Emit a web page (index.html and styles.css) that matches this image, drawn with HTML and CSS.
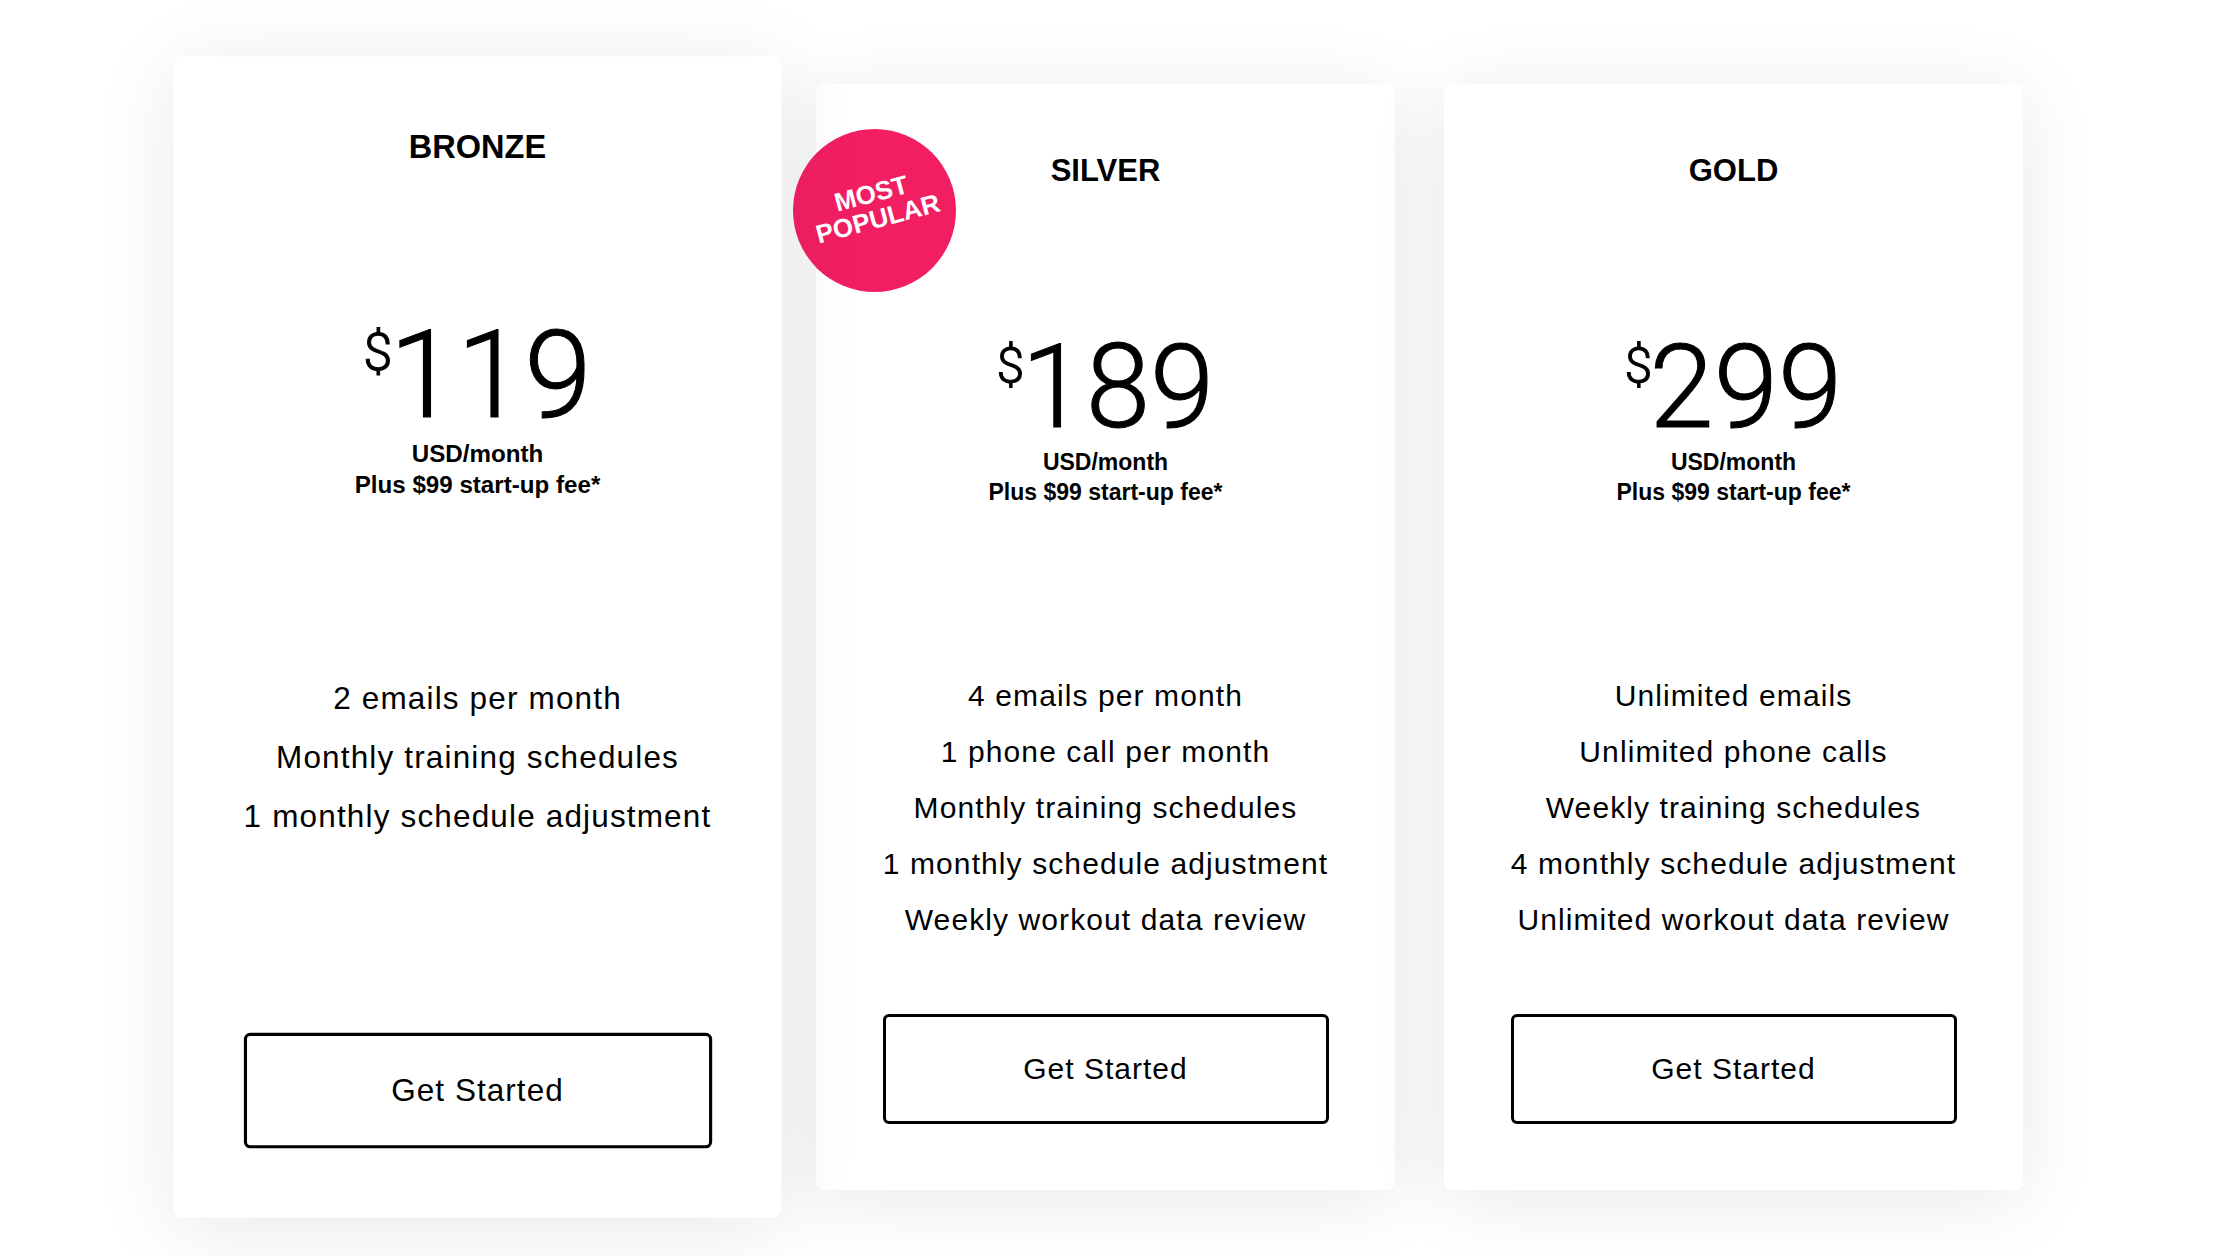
FILE: index.html
```html
<!DOCTYPE html>
<html lang="en">
<head>
<meta charset="utf-8">
<title>Pricing</title>
<link rel="stylesheet" href="styles.css">
</head>
<body>
<main class="pricing">
  <section class="plan plan--raised">
    <h2 class="plan__name">BRONZE</h2>
    <div class="plan__price"><span class="plan__currency">$</span><span class="plan__amount">119</span></div>
    <p class="plan__terms">USD/month<br>Plus $99 start-up fee*</p>
    <ul class="plan__features">
      <li>2 emails per month</li>
      <li>Monthly training schedules</li>
      <li>1 monthly schedule adjustment</li>
    </ul>
    <a class="plan__cta" href="#">Get Started</a>
  </section>
  <section class="plan">
    <div class="badge"><span class="badge__text">MOST<br>POPULAR</span></div>
    <h2 class="plan__name">SILVER</h2>
    <div class="plan__price"><span class="plan__currency">$</span><span class="plan__amount">189</span></div>
    <p class="plan__terms">USD/month<br>Plus $99 start-up fee*</p>
    <ul class="plan__features">
      <li>4 emails per month</li>
      <li>1 phone call per month</li>
      <li>Monthly training schedules</li>
      <li>1 monthly schedule adjustment</li>
      <li>Weekly workout data review</li>
    </ul>
    <a class="plan__cta" href="#">Get Started</a>
  </section>
  <section class="plan">
    <h2 class="plan__name">GOLD</h2>
    <div class="plan__price"><span class="plan__currency">$</span><span class="plan__amount">299</span></div>
    <p class="plan__terms">USD/month<br>Plus $99 start-up fee*</p>
    <ul class="plan__features">
      <li>Unlimited emails</li>
      <li>Unlimited phone calls</li>
      <li>Weekly training schedules</li>
      <li>4 monthly schedule adjustment</li>
      <li>Unlimited workout data review</li>
    </ul>
    <a class="plan__cta" href="#">Get Started</a>
  </section>
</main>
</body>
</html>
```

FILE: styles.css
```css
html, body {
  margin: 0;
  padding: 0;
  background: #fff;
}

body {
  font-family: "Liberation Sans", Arial, Helvetica, sans-serif;
  color: #000;
}

.pricing {
  display: flex;
  align-items: flex-start;
  gap: 49px;
  box-sizing: border-box;
  height: 1256px;
  padding: 84px 0 0 188px;
  overflow: hidden;
}

.plan {
  position: relative;
  flex: 0 0 579px;
  height: 1106px;
  box-sizing: border-box;
  padding: 67px 0 66px;
  display: flex;
  flex-direction: column;
  align-items: center;
  background: #fff;
  border-radius: 8px;
  box-shadow: 0 10px 80px rgba(0, 0, 0, 0.09);
}

.plan--raised {
  transform: scale(1.05);
  z-index: 2;
}

.plan__name {
  margin: 0;
  font-size: 31px;
  line-height: 40px;
  font-weight: 700;
}

.plan__price {
  margin-top: 148px;
  display: flex;
  align-items: flex-start;
  justify-content: center;
  font-family: Roboto, "Liberation Sans", sans-serif;
  font-weight: 300;
  -webkit-text-stroke: 1px #000;
}

.plan__currency {
  font-size: 50px;
  line-height: 50px;
  margin-top: 2px;
  margin-right: -3px;
}

.plan__amount {
  font-size: 116px;
  line-height: 96px;
  letter-spacing: 0;
}

.plan__terms {
  margin: 12px 0 0;
  font-size: 23px;
  line-height: 30px;
  font-weight: 700;
  text-align: center;
}

.plan__features {
  list-style: none;
  margin: 161px 0 0;
  padding: 0;
  font-size: 30px;
  line-height: 56px;
  letter-spacing: 1.1px;
  text-align: center;
}

.plan__cta {
  margin-top: auto;
  width: 446px;
  height: 110px;
  box-sizing: border-box;
  border: 3px solid #000;
  border-radius: 6px;
  display: flex;
  align-items: center;
  justify-content: center;
  font-size: 30px;
  letter-spacing: 1px;
  color: #000;
  text-decoration: none;
}

.badge {
  position: absolute;
  left: -23px;
  top: 45px;
  width: 163px;
  height: 163px;
  border-radius: 50%;
  background: #f11f62;
  color: #fff;
  display: flex;
  align-items: center;
  justify-content: center;
}

.badge__text {
  transform: rotate(-15deg);
  margin-top: -10px;
  font-weight: 700;
  font-size: 26px;
  line-height: 26px;
  text-align: center;
}
```
